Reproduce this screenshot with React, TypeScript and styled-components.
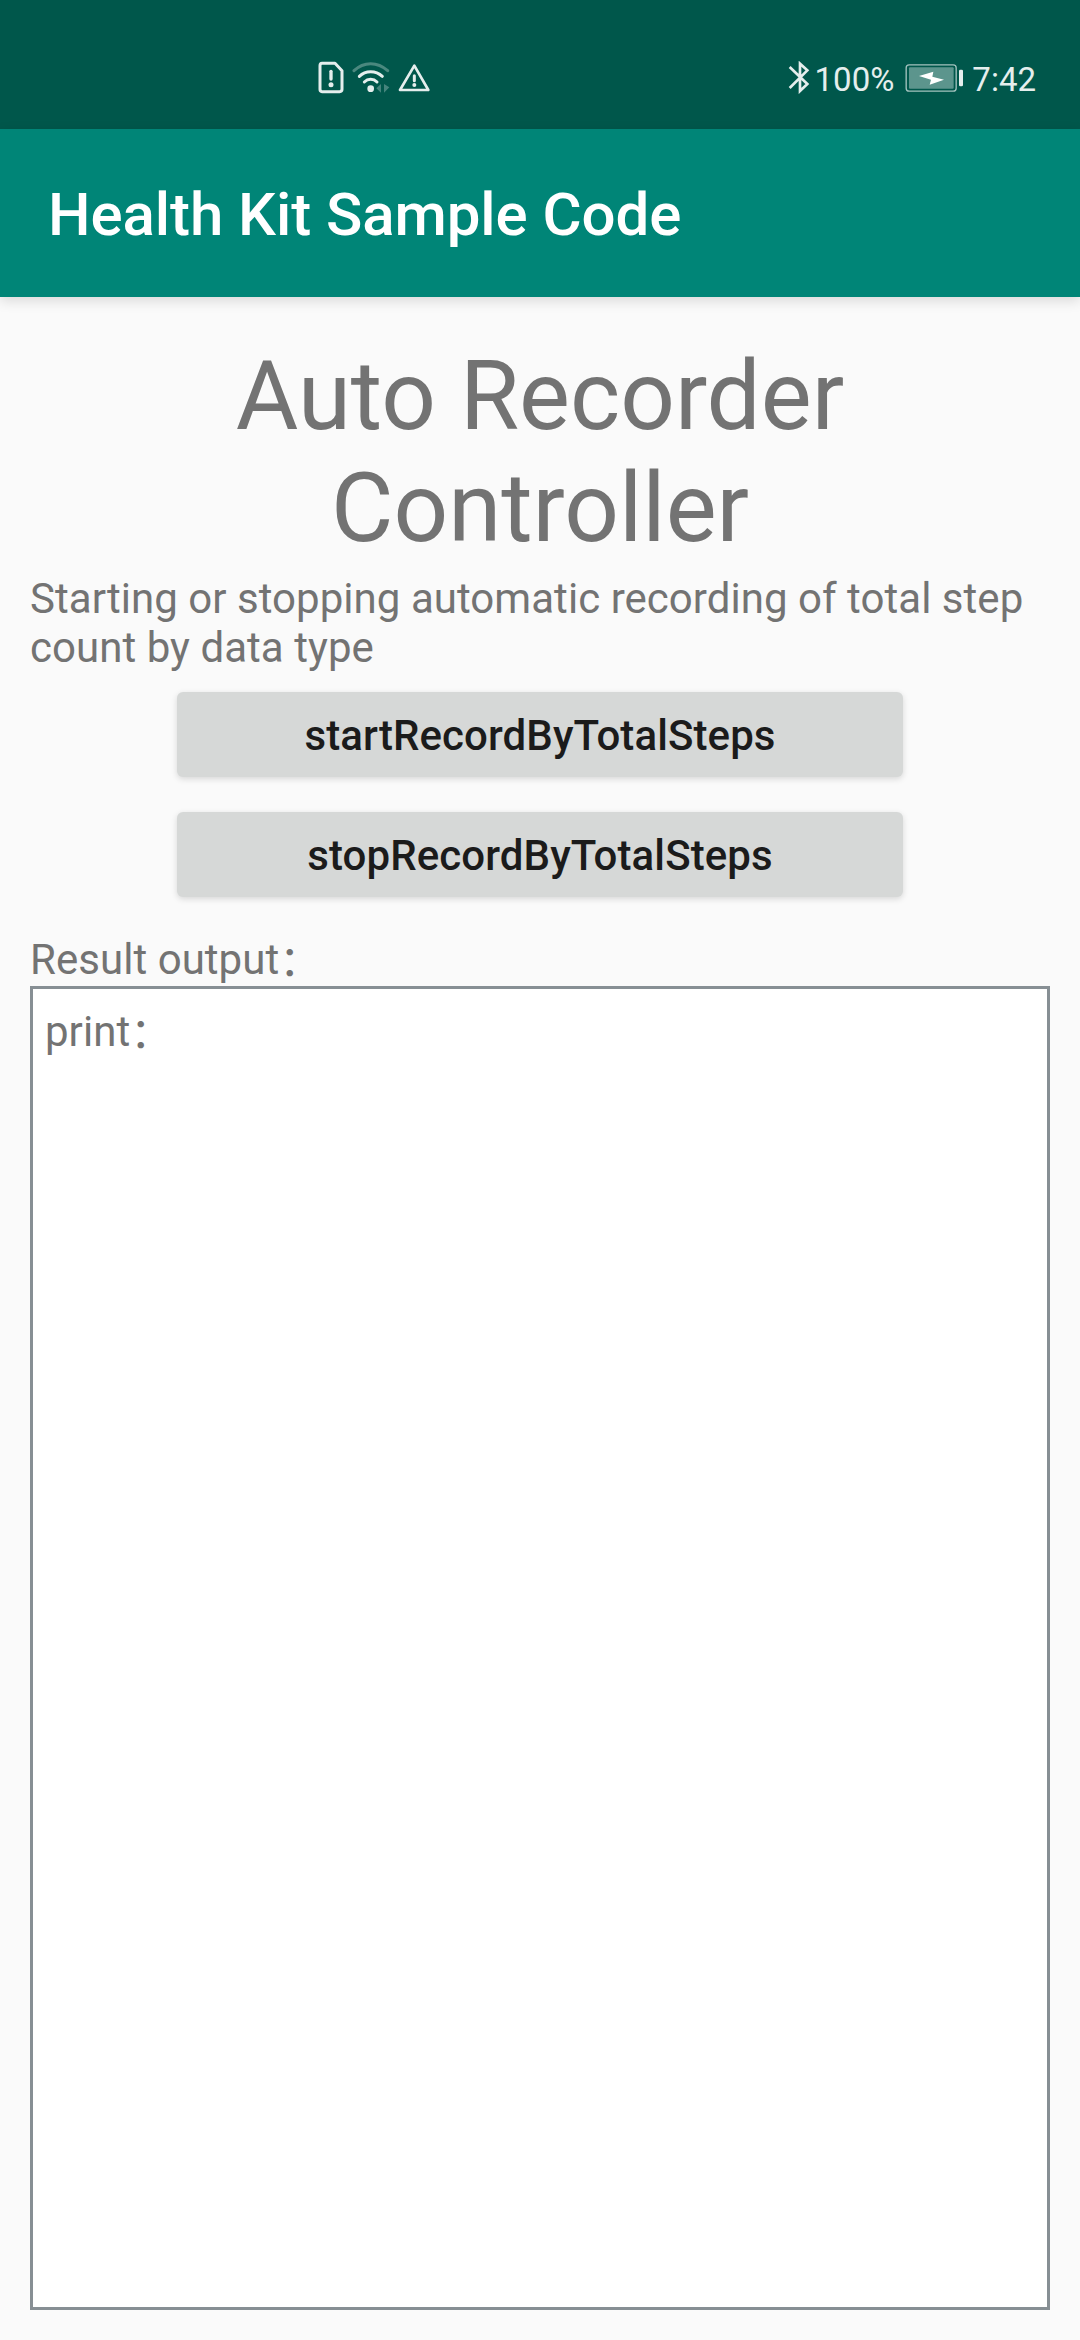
import React from "react";
import styled, { createGlobalStyle } from "styled-components";

const GlobalStyle = createGlobalStyle`
  * { box-sizing: border-box; }
  body {
    margin: 0;
    background: #fafafa;
    font-family: Roboto, "Noto Sans CJK SC", sans-serif;
  }
`;

const Screen = styled.div`
  display: flex;
  flex-direction: column;
  width: 1080px;
  height: 2340px;
  background: #fafafa;
  overflow: hidden;
`;

const StatusBar = styled.header`
  display: flex;
  justify-content: space-between;
  height: 129px;
  padding: 58px 44px 0 318px;
  background: #00574b;
  color: #e5eeed;
`;

const StatusGroup = styled.div<{ $gap: number }>`
  display: flex;
  align-items: center;
  gap: ${(p) => p.$gap}px;
  height: 39px;
`;

const StatusText = styled.span<{ $lead?: number; $trail?: number }>`
  margin-top: 4px;
  margin-left: ${(p) => p.$lead ?? 0}px;
  margin-right: ${(p) => p.$trail ?? 0}px;
  font-size: 33px;
  line-height: 39px;
  white-space: nowrap;
`;

const Icon = styled.svg`
  display: block;
  flex: none;
`;

const AppBar = styled.div`
  display: flex;
  align-items: center;
  height: 168px;
  padding: 4px 48px 0;
  background: #008577;
  color: #fff;
  box-shadow: 0 4px 12px rgba(0, 0, 0, 0.13);
`;

const AppTitle = styled.h1`
  margin: 0;
  font-size: 60px;
  font-weight: 500;
  line-height: 70px;
  letter-spacing: -0.07px;
`;

const Content = styled.main`
  display: flex;
  flex-direction: column;
  flex: 1;
  padding: 43px 30px 30px;
  color: #737373;
`;

const Heading = styled.h2`
  margin: 0 0 10px;
  padding: 0 150px;
  font-size: 96px;
  font-weight: 400;
  line-height: 112px;
  text-align: center;
`;

const Paragraph = styled.p`
  margin: 0;
  font-size: 42px;
  line-height: 49px;
  letter-spacing: 0.04px;
`;

const Colon = styled.span`
  line-height: 0;
  vertical-align: -2px;
`;

const Actions = styled.div`
  display: flex;
  flex-direction: column;
  align-items: center;
  gap: 35px;
  margin: 20px 0 38px;
`;

const ActionButton = styled.button`
  width: 726px;
  height: 85px;
  padding: 2px 0 0;
  border: 0;
  border-radius: 6px;
  background: #d6d8d7;
  color: #1b1b1b;
  font: 500 42px/49px Roboto, sans-serif;
  letter-spacing: 0.09px;
  box-shadow: 0 2px 6px rgba(0, 0, 0, 0.14);
`;

const Output = styled.section`
  flex: 1;
  margin-top: 2px;
  padding: 18px 12px;
  border: 3px solid #878f94;
  background: #fff;
`;

const SimAlertIcon = () => (
  <Icon width="26" height="33" viewBox="54 33 78 99" fill="none" stroke="#e5eeed">
    <path d="M66 40H105L126 62V118Q126 125 119 125H66Q60 125 60 118V47Q60 40 66 40Z" strokeWidth="9" strokeLinejoin="round" />
    <path d="M93 64V87" strokeWidth="10" strokeLinecap="round" />
    <circle cx="93" cy="104" r="7.5" fill="#e5eeed" stroke="none" />
  </Icon>
);

const WifiIcon = () => (
  <Icon width="38" height="33" viewBox="156 33 114 99" fill="none" stroke="#e5eeed" strokeLinecap="round" strokeWidth="9">
    <path d="M162 62Q184 41 212 41Q240 41 263 62" opacity="0.32" />
    <path d="M178 79Q192 65 212 65Q232 65 247 79" />
    <path d="M193 96Q201 88 212 88Q223 88 231 96" />
    <circle cx="212" cy="116" r="10" fill="#e5eeed" stroke="none" />
    <path d="M229 115L243 102V128ZM252 102V128L268 112Z" fill="#e5eeed" stroke="none" opacity="0.3" />
  </Icon>
);

const WarningIcon = () => (
  <Icon width="33" height="33" viewBox="293 33 99 99" fill="none" stroke="#e5eeed">
    <path d="M342 47L384 120H299Z" strokeWidth="8" strokeLinejoin="round" />
    <path d="M342 77V92" strokeWidth="9" strokeLinecap="round" />
    <circle cx="342" cy="105" r="6" fill="#e5eeed" stroke="none" />
  </Icon>
);

const BluetoothIcon = () => (
  <Icon width="22" height="33" viewBox="50 35 66 99" fill="none" stroke="#e5eeed" strokeWidth="8">
    <path d="M55 53L108 104L86 125V43L108 63L55 116" />
  </Icon>
);

const BatteryIcon = () => (
  <Icon width="60" height="30" viewBox="400 40 180 90">
    <rect x="403.500" y="45.500" width="150" height="79" rx="9" fill="none" stroke="#a4c3bf" strokeWidth="4" />
    <rect x="412" y="53" width="134" height="64" rx="3" fill="#5c958d" />
    <path d="M442 79L485 66L482 81L517 90L474 105L478 90Z" fill="#fff" />
    <rect x="562" y="60" width="12" height="50" rx="4" fill="#e5eeed" />
  </Icon>
);

export default function App() {
  return (
    <Screen>
      <GlobalStyle />
      <StatusBar>
        <StatusGroup $gap={8}>
          <SimAlertIcon />
          <WifiIcon />
          <WarningIcon />
        </StatusGroup>
        <StatusGroup $gap={5}>
          <BluetoothIcon />
          <StatusText $trail={6}>100%</StatusText>
          <BatteryIcon />
          <StatusText $lead={2}>7:42</StatusText>
        </StatusGroup>
      </StatusBar>
      <AppBar>
        <AppTitle>Health Kit Sample Code</AppTitle>
      </AppBar>
      <Content>
        <Heading>Auto Recorder Controller</Heading>
        <Paragraph>Starting or stopping automatic recording of total step count by data type</Paragraph>
        <Actions>
          <ActionButton type="button">startRecordByTotalSteps</ActionButton>
          <ActionButton type="button">stopRecordByTotalSteps</ActionButton>
        </Actions>
        <Paragraph>Result output<Colon>：</Colon></Paragraph>
        <Output>
          <Paragraph>print<Colon>：</Colon></Paragraph>
        </Output>
      </Content>
    </Screen>
  );
}
